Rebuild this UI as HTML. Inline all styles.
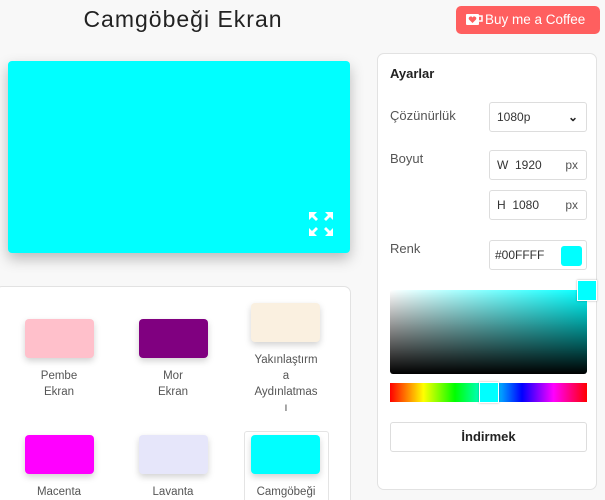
<!DOCTYPE html>
<html><head><meta charset="utf-8"><style>
*{box-sizing:border-box;margin:0;padding:0}
html,body{width:605px;height:500px;overflow:hidden}
body{background:#f8f8f8;font-family:"Liberation Sans",sans-serif;color:#222;position:relative}
.abs{position:absolute}
h1{position:absolute;left:0;width:366px;top:6px;text-align:center;font-weight:normal;font-size:23px;letter-spacing:1px;color:#222}
.bmc{left:456px;top:6px;width:144px;height:28px;background:#ff5f5f;border-radius:5px;color:#fff;font-size:13.5px;line-height:28px;padding-left:29px}
.prev{left:8px;top:61px;width:342px;height:192px;background:#00ffff;border-radius:4px;box-shadow:0 6px 14px rgba(0,0,0,.25)}
.panel{left:377px;top:53px;width:220px;height:437px;background:#fff;border:1px solid #e2e2e2;border-radius:7px}
.lbl{font-size:13px;color:#555;left:390px}
.inp{left:489px;width:98px;height:30px;border:1px solid #ddd;border-radius:3px;background:#fff;font-size:12px;color:#333;line-height:28px;padding-left:7px}
.px{position:absolute;right:8px;top:0;color:#555}
.grid{left:-5px;top:286px;width:356px;height:230px;background:#fff;border:1px solid #e2e2e2;border-radius:7px}
.sw{width:69px;height:39px;border-radius:4px;box-shadow:0 3px 7px rgba(0,0,0,.18)}
.cap{font-size:11.5px;color:#555;text-align:center;line-height:16px;width:90px}
</style></head><body>
<h1>Camgöbeği Ekran</h1>
<div class="abs bmc">Buy me a Coffee</div>
<svg class="abs" style="left:465px;top:13px" width="20" height="14" viewBox="0 0 20 14"><rect x="1" y="1" width="13" height="11" rx="1" fill="#fff"/><path d="M14 3h3v5h-3" fill="none" stroke="#fff" stroke-width="1.5"/><path d="M7.5 10 L4 6.5 A1.8 1.8 0 0 1 7.5 4.5 A1.8 1.8 0 0 1 11 6.5Z" fill="#ff5f5f"/></svg>
<div class="abs prev"></div>
<svg class="abs" style="left:308px;top:211px" width="26" height="26" viewBox="0 0 26 26" fill="#fff"><path d="M1 1h8l-3 3 4 4-2 2-4-4-3 3z"/><path d="M25 1h-8l3 3-4 4 2 2 4-4 3 3z"/><path d="M1 25h8l-3-3 4-4-2-2-4 4-3-3z"/><path d="M25 25h-8l3-3-4-4 2-2 4 4 3-3z"/></svg>
<div class="abs panel"></div>
<div class="abs" style="left:390px;top:66px;font-size:13px;font-weight:bold;color:#222">Ayarlar</div>
<div class="abs lbl" style="top:108px">Çözünürlük</div>
<div class="abs inp" style="top:102px;height:30px">1080p<span class="px" style="color:#222;font-weight:bold">&#8964;</span></div>
<div class="abs lbl" style="top:151px">Boyut</div>
<div class="abs inp" style="top:150px">W&nbsp; 1920<span class="px">px</span></div>
<div class="abs inp" style="top:190px">H&nbsp; 1080<span class="px">px</span></div>
<div class="abs lbl" style="top:241px">Renk</div>
<div class="abs inp" style="top:240px;padding-left:5px">#00FFFF</div>
<div class="abs" style="left:561px;top:246px;width:21px;height:20px;background:#0ff;border-radius:3px"></div>
<div class="abs" style="left:390px;top:290px;width:197px;height:84px;border-radius:3px;background:linear-gradient(to bottom,rgba(0,0,0,0),#000),linear-gradient(to right,#fff,#0ff)"></div>
<div class="abs" style="left:577px;top:280px;width:20px;height:21px;background:#0ff;border:1px solid #fff;box-shadow:0 0 2px rgba(0,0,0,.3)"></div>
<div class="abs" style="left:390px;top:383px;width:197px;height:19px;background:linear-gradient(to right,#f00,#ff0 17%,#0f0 33%,#0ff 50%,#00f 67%,#f0f 83%,#f00)"></div>
<div class="abs" style="left:479px;top:382px;width:20px;height:21px;background:#0ff;border:1px solid #fff;box-shadow:0 0 2px rgba(0,0,0,.3)"></div>
<div class="abs" style="left:390px;top:422px;width:197px;height:30px;border:1px solid #ddd;border-radius:3px;text-align:center;line-height:28px;font-size:13px;font-weight:bold;color:#222">İndirmek</div>
<div class="abs grid"></div>
<div class="abs sw" style="left:25px;top:319px;background:#ffc0cb"></div>
<div class="abs sw" style="left:139px;top:319px;background:#800080"></div>
<div class="abs sw" style="left:251px;top:303px;background:#faf0e0"></div>
<div class="abs cap" style="left:14px;top:368px">Pembe<br>Ekran</div>
<div class="abs cap" style="left:128px;top:368px">Mor<br>Ekran</div>
<div class="abs cap" style="left:241px;top:352px">Yakınlaştırm<br>a<br>Aydınlatmas<br>ı</div>
<div class="abs" style="left:244px;top:431px;width:85px;height:80px;border:1px solid #e4e4e4;border-radius:3px"></div>
<div class="abs sw" style="left:25px;top:435px;background:#f0f"></div>
<div class="abs sw" style="left:139px;top:435px;background:#e6e6fa"></div>
<div class="abs sw" style="left:251px;top:435px;background:#0ff"></div>
<div class="abs cap" style="left:14px;top:484px">Macenta</div>
<div class="abs cap" style="left:128px;top:484px">Lavanta</div>
<div class="abs cap" style="left:241px;top:484px">Camgöbeği</div>
</body></html>
